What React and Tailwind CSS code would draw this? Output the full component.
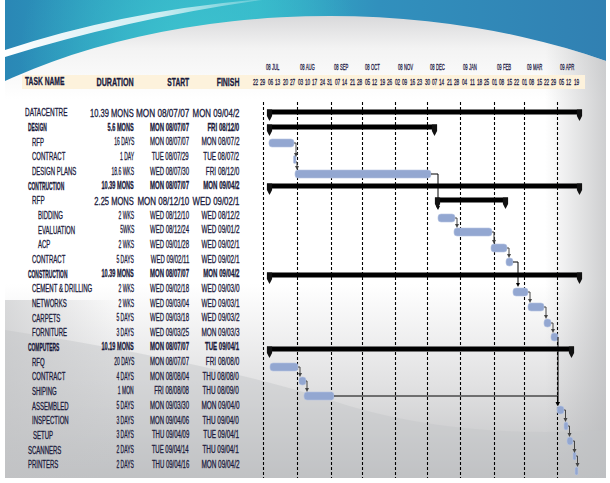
import React from 'react';

const INK = 'text-[#1a1a3c]';

const ROWS = [
  { name: 'DATACENTRE', t: 'top', ind: 'pl-[3px]', dur: '10.39 MONS', start: 'MON 08/07/07', fin: 'MON 09/04/2' },
  { name: 'DESIGN', t: 'sum', ind: 'pl-[6px]', dur: '5.6 MONS', start: 'MON 08/07/07', fin: 'FRI 08/12/0' },
  { name: 'RFP', t: 'task', ind: 'pl-[10px]', dur: '16 DAYS', start: 'MON 08/07/07', fin: 'MON 08/07/2' },
  { name: 'CONTRACT', t: 'task', ind: 'pl-[10px]', dur: '1 DAY', start: 'TUE 08/07/29', fin: 'TUE 08/07/2' },
  { name: 'DESIGN PLANS', t: 'task', ind: 'pl-[10px]', dur: '18.6 WKS', start: 'WED 08/07/30', fin: 'FRI 08/12/0' },
  { name: 'CONTRUCTION', t: 'sum', ind: 'pl-[6px]', dur: '10.39 MONS', start: 'MON 08/07/07', fin: 'MON 09/04/2' },
  { name: 'RFP', t: 'mid', ind: 'pl-[10px]', dur: '2.25 MONS', start: 'MON 08/12/10', fin: 'WED 09/02/1' },
  { name: 'BIDDING', t: 'task', ind: 'pl-[16px]', dur: '2 WKS', start: 'WED 08/12/10', fin: 'WED 08/12/2' },
  { name: 'EVALUATION', t: 'task', ind: 'pl-[16px]', dur: '5WKS', start: 'WED 08/12/24', fin: 'WED 09/01/2' },
  { name: 'ACP', t: 'task', ind: 'pl-[16px]', dur: '2 WKS', start: 'WED 09/01/28', fin: 'WED 09/02/1' },
  { name: 'CONTRACT', t: 'task', ind: 'pl-[10px]', dur: '5 DAYS', start: 'WED 09/02/11', fin: 'WED 09/02/1' },
  { name: 'CONSTRUCTION', t: 'sum', ind: 'pl-[6px]', dur: '10.39 MONS', start: 'MON 08/07/07', fin: 'MON 09/04/2' },
  { name: 'CEMENT & DRILLING', t: 'task', ind: 'pl-[10px]', dur: '2 WKS', start: 'WED 09/02/18', fin: 'WED 09/03/0' },
  { name: 'NETWORKS', t: 'task', ind: 'pl-[10px]', dur: '2 WKS', start: 'WED 09/03/04', fin: 'WED 09/03/1' },
  { name: 'CARPETS', t: 'task', ind: 'pl-[10px]', dur: '5 DAYS', start: 'WED 09/03/18', fin: 'WED 09/03/2' },
  { name: 'FORNITURE', t: 'task', ind: 'pl-[10px]', dur: '3 DAYS', start: 'WED 09/03/25', fin: 'MON 09/03/3' },
  { name: 'COMPUTERS', t: 'sum', ind: 'pl-[6px]', dur: '10.19 MONS', start: 'MON 08/07/07', fin: 'TUE 09/04/1' },
  { name: 'RFQ', t: 'task', ind: 'pl-[10px]', dur: '20 DAYS', start: 'MON 08/07/07', fin: 'FRI 08/08/0' },
  { name: 'CONTRACT', t: 'task', ind: 'pl-[10px]', dur: '4 DAYS', start: 'MON 08/08/04', fin: 'THU 08/08/0' },
  { name: 'SHIPING', t: 'task', ind: 'pl-[10px]', dur: '1 MON', start: 'FRI 08/08/08', fin: 'THU 08/09/0' },
  { name: 'ASSEMBLED', t: 'task', ind: 'pl-[10px]', dur: '5 DAYS', start: 'MON 09/03/30', fin: 'MON 09/04/0' },
  { name: 'INSPECTION', t: 'task', ind: 'pl-[10px]', dur: '3 DAYS', start: 'MON 09/04/06', fin: 'THU 09/04/0' },
  { name: 'SETUP', t: 'task', ind: 'pl-[11px]', dur: '3 DAYS', start: 'THU 09/04/09', fin: 'TUE 09/04/1' },
  { name: 'SCANNERS', t: 'task', ind: 'pl-[6px]', dur: '2 DAYS', start: 'TUE 09/04/14', fin: 'THU 09/04/1' },
  { name: 'PRINTERS', t: 'task', ind: 'pl-[6px]', dur: '2 DAYS', start: 'THU 09/04/16', fin: 'MON 09/04/2' },
];

const STYLE = {
  top: { row: 'text-[10.5px] font-normal', name: 'scale-x-[0.61]', dur: 'scale-x-[0.72]', start: 'scale-x-[0.78]', fin: 'scale-x-[0.75]' },
  mid: { row: 'text-[10.5px] font-normal', name: 'scale-x-[0.6]', dur: 'scale-x-[0.72]', start: 'scale-x-[0.76]', fin: 'scale-x-[0.75]' },
  sum: { row: 'text-[10px] font-bold', name: 'scale-x-[0.49]', dur: 'scale-x-[0.56]', start: 'scale-x-[0.6]', fin: 'scale-x-[0.61]' },
  task: { row: 'text-[10px] font-normal', name: 'scale-x-[0.6]', dur: 'scale-x-[0.5]', start: 'scale-x-[0.6]', fin: 'scale-x-[0.64]' },
};

const DAYS = ['22','29','06','13','20','27','03','10','17','24','31','07','14','21','28','05','12','19','26','02','09','16','23','30','07','14','21','28','04','11','18','25','01','08','15','22','01','08','15','22','29','05','12','19'];

const MONTHS = [
  ['08 JUL', 34], ['08 AUG', 34], ['08 SEP', 31], ['08 OCT', 33], ['08 NOV', 32],
  ['08 DEC', 33], ['09 JAN', 34], ['09 FEB', 30], ['09 MAR', 33], ['09 APR', 33],
];

const GRID_X = [263, 297, 331, 362, 395, 427, 460, 494, 524, 557];

const SUMMARY = [
  { y: 112, x1: 267, x2: 582 },
  { y: 127, x1: 267, x2: 437 },
  { y: 186, x1: 267, x2: 582 },
  { y: 200, x1: 435, x2: 508 },
  { y: 275, x1: 267, x2: 582 },
  { y: 349, x1: 267, x2: 574 },
];

const BARS = [
  { y: 143, x1: 269, x2: 294 },
  { y: 159.5, x1: 293.5, x2: 296 },
  { y: 174, x1: 295, x2: 431 },
  { y: 218, x1: 438, x2: 455 },
  { y: 232, x1: 454, x2: 492 },
  { y: 248, x1: 491, x2: 507 },
  { y: 262, x1: 506, x2: 513 },
  { y: 292, x1: 513, x2: 528 },
  { y: 307, x1: 528, x2: 544 },
  { y: 323, x1: 544, x2: 551 },
  { y: 337, x1: 551, x2: 558 },
  { y: 367, x1: 270, x2: 298 },
  { y: 381, x1: 299, x2: 306 },
  { y: 396, x1: 304, x2: 334 },
  { y: 410, x1: 557, x2: 564 },
  { y: 426, x1: 564, x2: 568 },
  { y: 441, x1: 567, x2: 573 },
  { y: 456, x1: 573, x2: 576 },
  { y: 471, x1: 575, x2: 578 },
];

const LINKS = [
  [294, 143, 296, 156, '#444'],
  [296, 162, 297, 169, '#444'],
  [431, 174, 438, 209, '#000'],
  [455, 218, 457, 227, '#444'],
  [492, 232, 494, 243, '#444'],
  [507, 248, 509, 257, '#444'],
  [513, 262, 518, 286, '#000'],
  [528, 292, 530, 302, '#444'],
  [544, 307, 546, 318, '#444'],
  [551, 323, 553, 332, '#444'],
  [558, 337, 558, 405, '#000'],
  [298, 367, 300, 376, '#444'],
  [306, 381, 307, 391, '#444'],
  [334, 396, 557.5, 405, '#000'],
  [564, 410, 565.5, 421, '#444'],
  [568, 426, 569.5, 436, '#444'],
  [573, 441, 574.5, 452, '#444'],
  [576, 456, 577.5, 466, '#444'],
];

function S({ children, cls, right }) {
  return (
    <span className={`inline-block shrink-0 whitespace-nowrap leading-none ${right ? 'origin-right' : 'origin-left'} ${cls}`}>
      {children}
    </span>
  );
}

function Background() {
  return (
    <svg className="absolute left-0 top-0" width="610" height="483" viewBox="0 0 610 483">
      <defs>
        <clipPath id="bgclip">
          <rect x="5" y="0" width="601" height="478" />
        </clipPath>
        <linearGradient id="blueg" x1="0" y1="0" x2="610" y2="0" gradientUnits="userSpaceOnUse">
          <stop offset="0" stopColor="#2a86b5" />
          <stop offset="0.25" stopColor="#2ea6c2" />
          <stop offset="0.42" stopColor="#33b4c8" />
          <stop offset="0.62" stopColor="#3190bd" />
          <stop offset="1" stopColor="#3180b2" />
        </linearGradient>
        <radialGradient id="glow" cx="190" cy="55" r="170" gradientUnits="userSpaceOnUse">
          <stop offset="0" stopColor="#3fc6d0" stopOpacity="0.9" />
          <stop offset="1" stopColor="#3fc6d0" stopOpacity="0" />
        </radialGradient>
        <linearGradient id="swoosh" x1="5" y1="0" x2="260" y2="0" gradientUnits="userSpaceOnUse">
          <stop offset="0" stopColor="#ffffff" stopOpacity="1" />
          <stop offset="0.6" stopColor="#ffffff" stopOpacity="0.75" />
          <stop offset="1" stopColor="#ffffff" stopOpacity="0.2" />
        </linearGradient>
        <linearGradient id="sheet" x1="0" y1="16" x2="0" y2="478" gradientUnits="userSpaceOnUse">
          <stop offset="0" stopColor="#d9d9db" />
          <stop offset="0.07" stopColor="#f3f3f3" />
          <stop offset="0.18" stopColor="#ffffff" />
          <stop offset="0.58" stopColor="#ffffff" />
          <stop offset="0.8" stopColor="#e1e1e2" />
          <stop offset="1" stopColor="#bebfc1" />
        </linearGradient>
        <linearGradient id="rshade" x1="545" y1="0" x2="606" y2="0" gradientUnits="userSpaceOnUse">
          <stop offset="0" stopColor="#b9babc" stopOpacity="0" />
          <stop offset="1" stopColor="#b9babc" stopOpacity="0.7" />
        </linearGradient>
        <linearGradient id="lshade" x1="5" y1="0" x2="120" y2="0" gradientUnits="userSpaceOnUse">
          <stop offset="0" stopColor="#c2c3c5" stopOpacity="0.6" />
          <stop offset="1" stopColor="#c2c3c5" stopOpacity="0" />
        </linearGradient>
        <clipPath id="sheetclip">
          <ellipse cx="330" cy="287" rx="500" ry="271" />
        </clipPath>
      </defs>
      <g clipPath="url(#bgclip)">
        <rect x="0" y="0" width="610" height="483" fill="url(#blueg)" />
        <rect x="0" y="0" width="610" height="140" fill="url(#glow)" />
        <path d="M5,50 Q120,12 252,0 L262,0 Q128,19 5,57 Z" fill="url(#swoosh)" />
        <ellipse cx="330" cy="287" rx="500" ry="271" fill="url(#sheet)" />
        <g clipPath="url(#sheetclip)">
          <rect x="545" y="40" width="61" height="440" fill="url(#rshade)" />
          <path d="M5,330 Q200,360 330,400 Q450,440 606,430 L606,478 L5,478 Z" fill="#c4c5c7" opacity="0.45" />
          <rect x="5" y="300" width="120" height="180" fill="url(#lshade)" />
        </g>
      </g>
    </svg>
  );
}

function Chart() {
  return (
    <svg width="356" height="378" viewBox="254 100 356 378" className="block shrink-0">
      {GRID_X.map((x) => (
        <line key={x} x1={x + 0.5} y1="102" x2={x + 0.5} y2="478" stroke="#000" strokeWidth="1.1" strokeDasharray="3 2" />
      ))}
      {BARS.map((b, i) => {
        const w = b.x2 - b.x1;
        return (
          <rect
            key={i}
            x={b.x1}
            y={b.y - 4}
            width={w}
            height="8"
            rx={Math.min(3, w / 2)}
            fill="#93a7d1"
            stroke="#b7c5e2"
            strokeWidth="0.6"
          />
        );
      })}
      {LINKS.map(([x1, y1, xv, y2, c], i) => (
        <g key={i}>
          <path d={`M${x1} ${y1} H${xv} V${y2 - 2}`} fill="none" stroke={c} strokeWidth="1" />
          <polygon points={`${xv - 2},${y2 - 3} ${xv + 2},${y2 - 3} ${xv},${y2 + 1}`} fill={c} />
        </g>
      ))}
      {SUMMARY.map((s, i) => {
        const a = s.x1 + 2.5;
        const b = s.x2 - 2.5;
        const mk = (m) => `${m - 2.6},${s.y - 2.5} ${m + 2.6},${s.y - 2.5} ${m + 2.6},${s.y + 4} ${m},${s.y + 9} ${m - 2.6},${s.y + 4}`;
        return (
          <g key={i}>
            <rect x={s.x1} y={s.y - 2.5} width={s.x2 - s.x1} height="5" fill="#000" />
            <polygon points={mk(a)} fill="#111" />
            <polygon points={mk(b)} fill="#111" />
          </g>
        );
      })}
    </svg>
  );
}

export default function App() {
  return (
    <div className="relative w-[610px] h-[483px] overflow-hidden bg-white font-['Liberation_Sans',Arial,sans-serif]">
      <Background />
      <div className={`relative flex flex-col pl-[22px] pt-[62px] ${INK} [-webkit-text-stroke:0.3px_#1a1a3c]`}>
        {/* month labels */}
        <div className="flex h-[12px] items-center">
          <div className="w-[241px] shrink-0" />
          {MONTHS.map(([m, w]) => (
            <div key={m} className="shrink-0 pl-[3px] text-[9px] text-[#2a2350]" style={{ width: w }}>
              <S cls="scale-x-[0.47]">{m}</S>
            </div>
          ))}
        </div>
        {/* header band */}
        <div className="mt-[1px] flex h-[14px] w-[563px] items-center bg-[#fdf2dc] text-[10.5px] font-bold">
          <div className="w-[68px] shrink-0 pl-[3px]">
            <S cls="scale-x-[0.64]">TASK NAME</S>
          </div>
          <div className="flex w-[44px] shrink-0 justify-end">
            <S right cls="scale-x-[0.68]">DURATION</S>
          </div>
          <div className="flex w-[55px] shrink-0 justify-end">
            <S right cls="scale-x-[0.64]">START</S>
          </div>
          <div className="flex w-[50px] shrink-0 justify-end">
            <S right cls="scale-x-[0.66]">FINISH</S>
          </div>
          <div className="w-[15px] shrink-0" />
          <div className="flex text-[9px] font-normal text-[#2a2350]">
            {DAYS.map((d, i) => (
              <div key={i} className="flex w-[7.48px] shrink-0 justify-center">
                <S cls="scale-x-[0.52] origin-center">{d}</S>
              </div>
            ))}
          </div>
        </div>
        {/* body */}
        <div className="mt-[11px] flex">
          <div className="w-[232px] shrink-0 pt-[5.67px]">
            {ROWS.map((r, i) => {
              const st = STYLE[r.t];
              return (
                <div key={i} className={`flex h-[14.67px] items-center ${st.row}`}>
                  <div className={`w-[68px] shrink-0 ${r.ind}`}>
                    <S cls={st.name}>{r.name}</S>
                  </div>
                  <div className="flex w-[44px] shrink-0 justify-end">
                    <S right cls={st.dur}>{r.dur}</S>
                  </div>
                  <div className="flex w-[55px] shrink-0 justify-end">
                    <S right cls={st.start}>{r.start}</S>
                  </div>
                  <div className="flex w-[50px] shrink-0 justify-end">
                    <S right cls={st.fin}>{r.fin}</S>
                  </div>
                </div>
              );
            })}
          </div>
          <Chart />
        </div>
      </div>
    </div>
  );
}
